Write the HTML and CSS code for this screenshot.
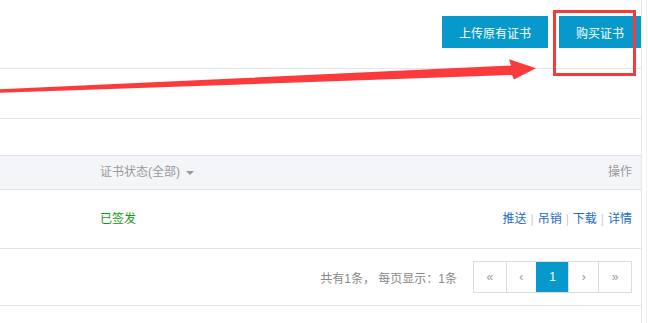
FILE: index.html
```html
<!DOCTYPE html>
<html lang="zh-CN">
<head>
  <meta charset="UTF-8">
  <title>证书管理</title>
  <link rel="stylesheet" href="styles.css">
</head>
<body>
<div class="frame">
  <div class="page">
    <div class="toolbar">
      <button class="btn">上传原有证书</button>
      <button class="btn">购买证书</button>
    </div>

    <div class="filter-bar"></div>

    <div class="cert-table">
      <div class="row head">
        <div class="cell"></div>
        <div class="cell status-head">证书状态(全部) <span class="caret"></span></div>
        <div class="cell actions">操作</div>
      </div>
      <div class="row body-row">
        <div class="cell"></div>
        <div class="cell status-ok">已签发</div>
        <div class="cell actions">
          <a href="#">推送</a><span class="sep">|</span><a href="#">吊销</a><span class="sep">|</span><a href="#">下载</a><span class="sep">|</span><a href="#">详情</a>
        </div>
      </div>
      <div class="pager-row">
        <span class="total">共有1条， 每页显示：1条</span>
        <div class="pager">
          <a href="#">«</a>
          <a href="#">‹</a>
          <a href="#" class="active">1</a>
          <a href="#">›</a>
          <a href="#">»</a>
        </div>
      </div>
    </div>

    <!-- annotation overlay -->
    <svg class="arrow" width="648" height="323" viewBox="0 0 648 323">
      <polygon points="0,89.3 511,65.5 509,59.3 536,68.3 514,79.5 512,75 0,92.8" fill="#fb3b3b"/>
    </svg>
    <div class="mark"></div>
  </div>
  <div class="gutter"></div>
</div>
</body>
</html>
```

FILE: styles.css
```css
body {
  margin: 0;
  font-family: "Liberation Sans", "Noto Sans CJK SC", sans-serif;
  font-size: 12px;
  color: #333;
  background-color: white;
  overflow: hidden;
}

.frame {
  display: flex;
  height: 323px;
}

.page {
  position: relative;
  width: 641px;
  flex: 0 0 641px;
  border-right: 1px solid #e4e8ed;
}

.gutter {
  margin-left: 4px;
  flex: 1;
  border-left: 1px solid #f1f3f6;
}

.toolbar {
  height: 69px;
  box-sizing: border-box;
  padding-top: 16px;
  display: flex;
  justify-content: flex-end;
  gap: 11px;
  border-bottom: 1px solid #e2e6eb;
}

.btn {
  height: 32px;
  padding: 0 17px;
  border: none;
  background-color: #0799cb;
  color: white;
  font-family: inherit;
  font-size: 12px;
  cursor: pointer;
}

.filter-bar {
  height: 49px;
  border-bottom: 1px solid #e2e6eb;
}

.cert-table {
  margin-top: 36px;
  border-top: 1px solid #e2e6eb;
}

.row {
  display: grid;
  grid-template-columns: 100px 1fr auto;
  border-bottom: 1px solid #e2e6eb;
}

.row.head {
  height: 33px;
  line-height: 33px;
  background-color: #f4f5f9;
  color: #999;
}

.row.body-row {
  height: 58px;
  line-height: 58px;
}

.actions {
  padding-right: 9px;
  text-align: right;
}

.caret {
  display: inline-block;
  width: 0;
  height: 0;
  margin-left: 3px;
  vertical-align: middle;
  border-left: 4px solid transparent;
  border-right: 4px solid transparent;
  border-top: 4px solid #999;
}

.status-ok {
  color: #139a13;
}

.actions a {
  color: #1d6bc7;
  text-decoration: none;
}

.sep {
  color: #ccc;
  margin: 0 4px;
}

.pager-row {
  height: 56px;
  display: flex;
  align-items: center;
  justify-content: flex-end;
  padding-right: 9px;
  gap: 16px;
  border-bottom: 1px solid #e2e6eb;
}

.total {
  color: #888;
}

.pager {
  display: flex;
  border: 1px solid #ddd;
  height: 30px;
}

.pager a {
  display: block;
  padding: 0 12.5px;
  line-height: 30px;
  color: #999;
  text-decoration: none;
  border-left: 1px solid #ddd;
}

.pager a:first-child {
  border-left: none;
}

.pager a.active {
  background-color: #0799cb;
  color: white;
  border-left-color: #0799cb;
}

.arrow {
  position: absolute;
  left: 0;
  top: 0;
  pointer-events: none;
}

.mark {
  position: absolute;
  left: 553px;
  top: 10px;
  width: 83px;
  height: 66px;
  box-sizing: border-box;
  border: 3px solid #f33b3b;
}
```
